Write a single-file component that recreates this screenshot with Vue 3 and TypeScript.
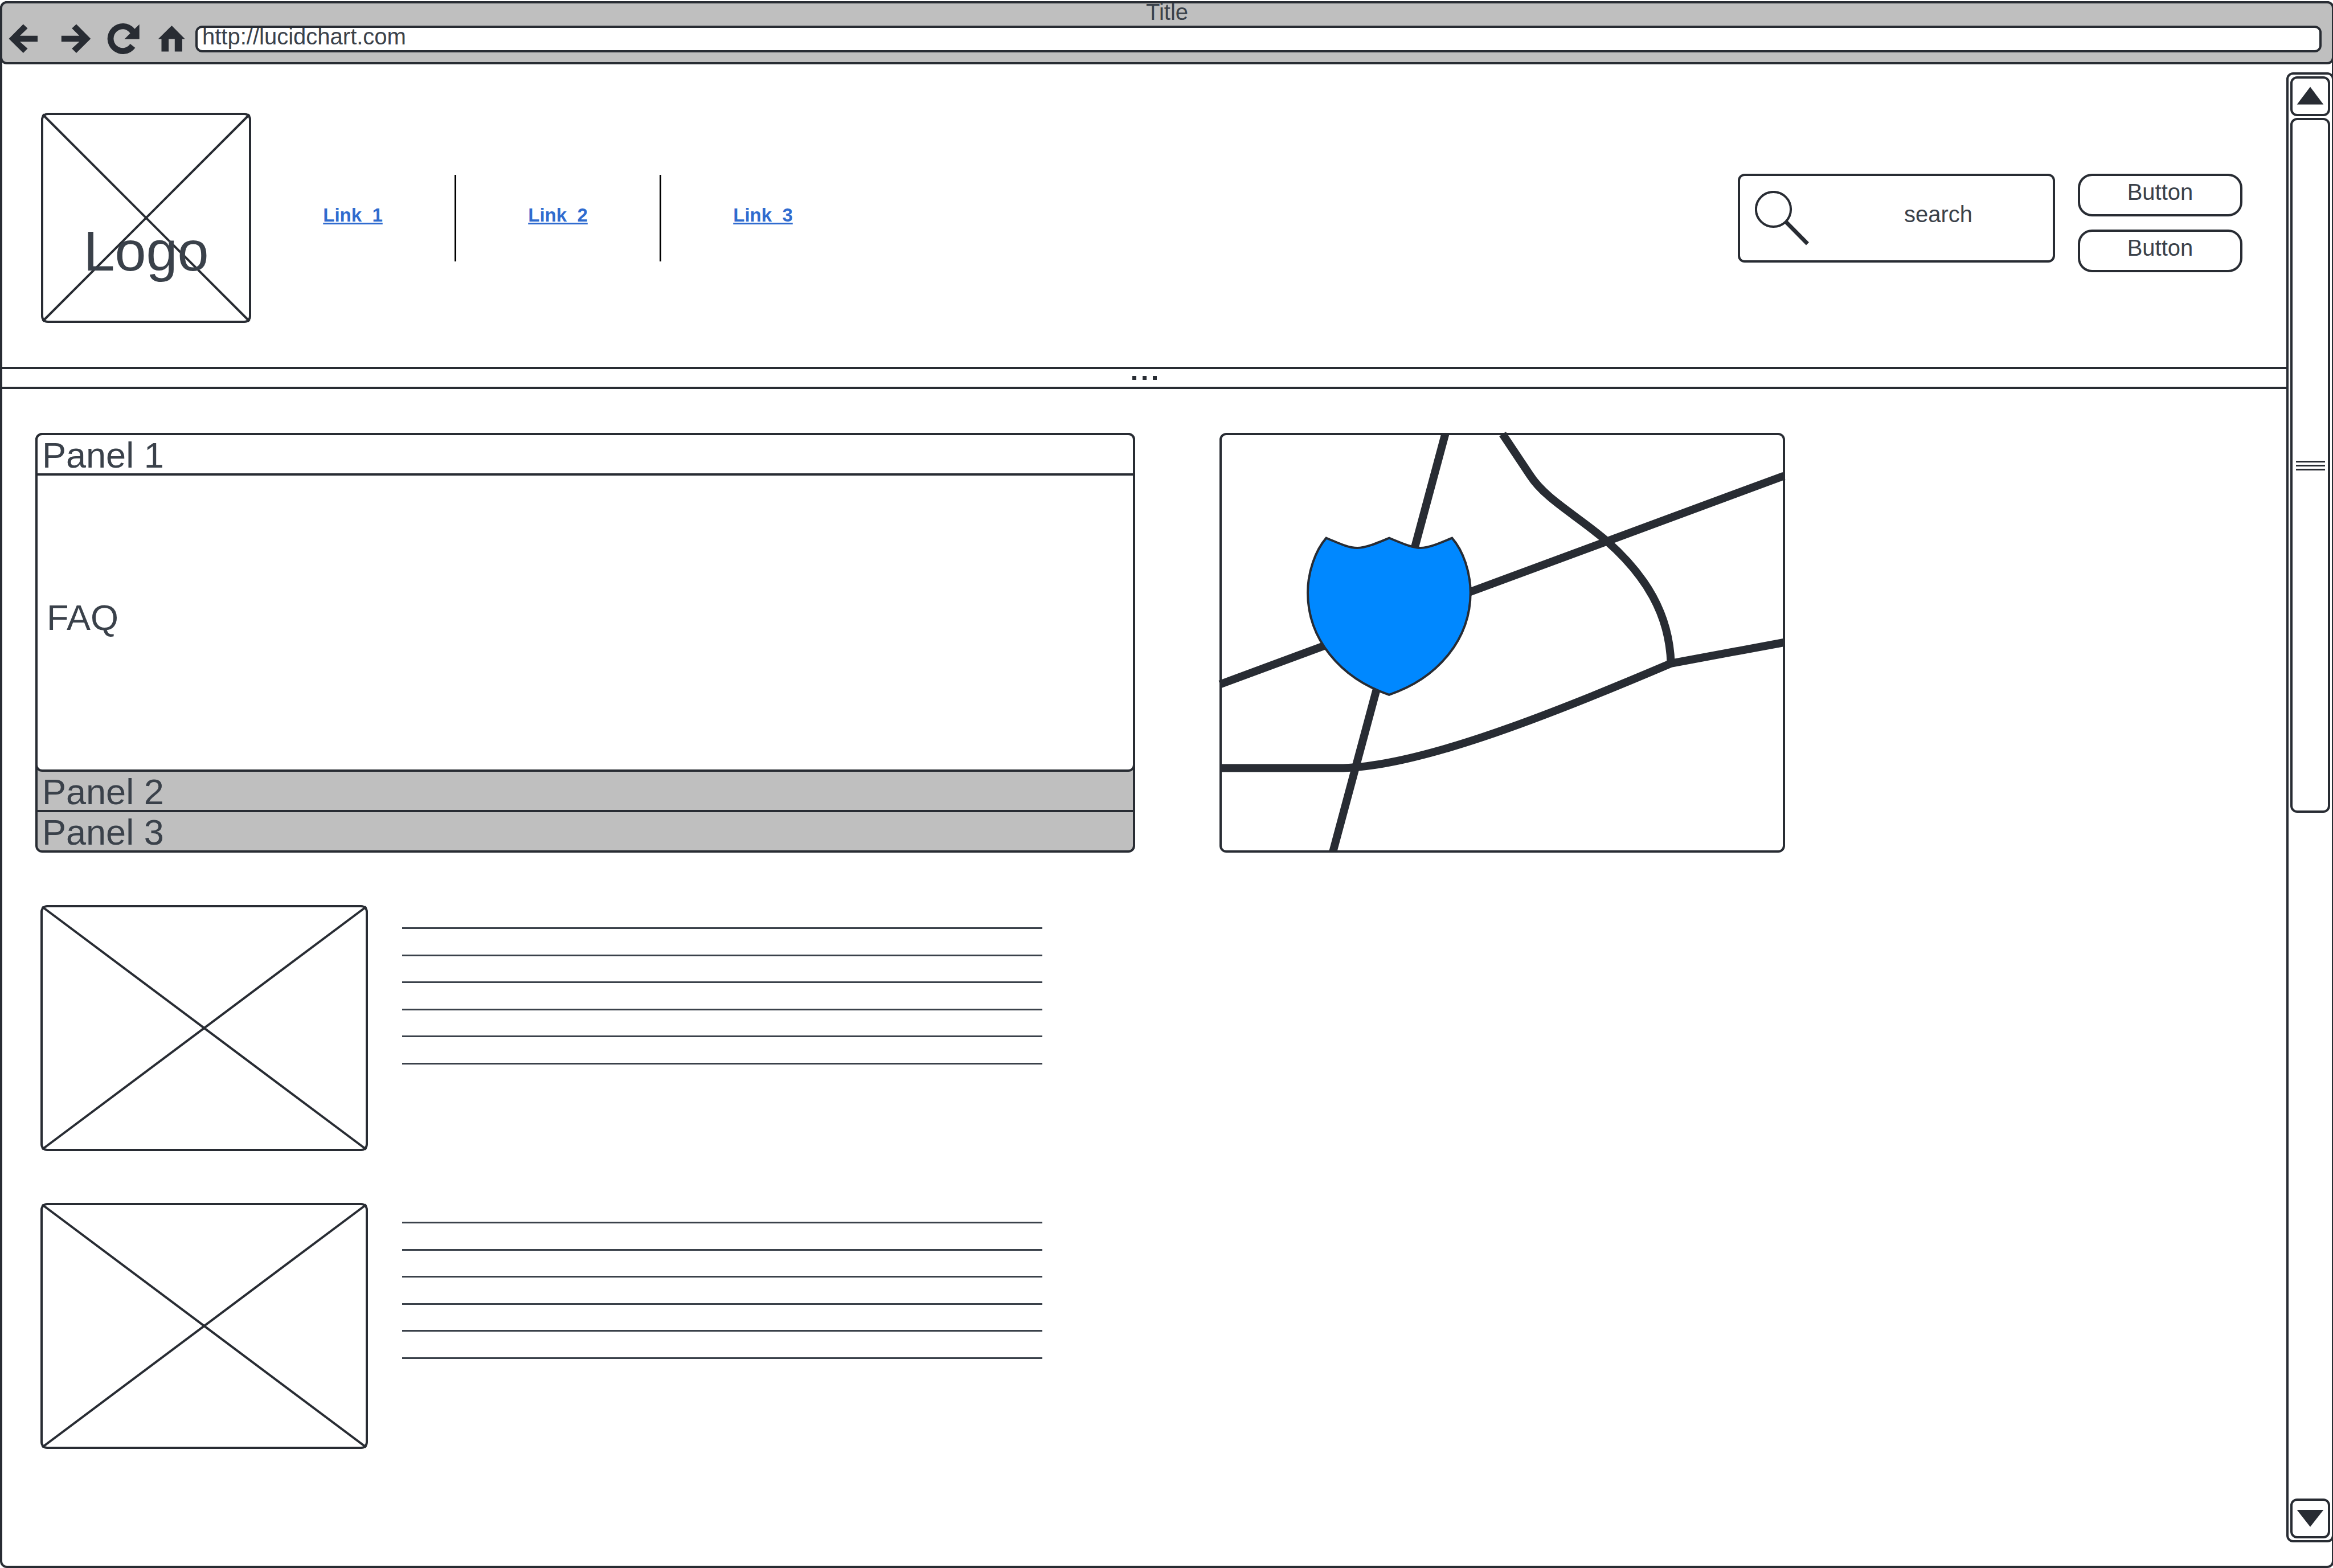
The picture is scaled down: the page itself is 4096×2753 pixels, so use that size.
<script setup lang="ts">
import { ref } from 'vue'

interface NavLink {
  label: string
  href: string
}

interface Panel {
  id: number
  title: string
}

interface ToolIcon {
  name: string
  path: string
}

const address = ref<string>('http://lucidchart.com')
const query = ref<string>('')

const toolIcons: ToolIcon[] = [
  {
    name: 'Back',
    path: 'M8.5 27.9L33.8 2.5L41.5 9.8L28 22.8H59V33.3H28L41.5 45.3L33.8 52.9Z',
  },
  {
    name: 'Forward',
    path: 'M68.2 27.9L43 2.5L35.2 9.8L48.3 22.8H16.8V33.3H48.3L35.2 45.3L43 52.9Z',
  },
  {
    name: 'Reload',
    path: 'M69.7 2.8V28.8H43.4L53.6 18.4A16 16.5 0 1 0 53.6 37.1L62.4 44A27 27 0 1 1 61.4 10.7Z',
  },
  {
    name: 'Home',
    path: 'M42.5 5L65.8 28.5H60.9V50.4H47.8V28.5H37.1V50.4H24.5V28.5H18.7Z',
  },
]

const links: NavLink[] = [
  { label: 'Link  1', href: '#link-1' },
  { label: 'Link  2', href: '#link-2' },
  { label: 'Link  3', href: '#link-3' },
]

const closedPanels: Panel[] = [
  { id: 2, title: 'Panel 2' },
  { id: 3, title: 'Panel 3' },
]

const articles: number[] = [1, 2]
const linesPerArticle = 6
</script>

<template>
  <div class="page">
    <div class="window">
      <header class="chrome">
        <div class="chrome-title">Title</div>
        <div class="toolbar">
          <button v-for="icon in toolIcons" :key="icon.name" type="button" class="tool" :aria-label="icon.name">
            <svg viewBox="0 0 84 56" width="84" height="56" aria-hidden="true">
              <path :d="icon.path" />
            </svg>
          </button>
          <input v-model="address" class="address" type="text" aria-label="Address" />
        </div>
      </header>

      <div class="body">
        <div class="content">
          <section class="masthead">
            <div class="placeholder logo">
              <svg class="cross" aria-hidden="true">
                <line x1="0" y1="0" x2="100%" y2="100%" />
                <line x1="100%" y1="0" x2="0" y2="100%" />
              </svg>
              <span class="logo-text">Logo</span>
            </div>
            <nav class="links">
              <div v-for="link in links" :key="link.href" class="link-cell">
                <a :href="link.href">{{ link.label }}</a>
              </div>
            </nav>
            <div class="tools">
              <label class="search">
                <svg class="lens" viewBox="0 0 96 98" width="96" height="98" aria-hidden="true">
                  <circle cx="32.5" cy="32.5" r="30.6" />
                  <line x1="54" y1="54" x2="92.5" y2="93" />
                </svg>
                <input v-model="query" type="text" placeholder="search" aria-label="search" />
              </label>
              <div class="buttons">
                <button type="button" class="action">Button</button>
                <button type="button" class="action">Button</button>
              </div>
            </div>
          </section>

          <div class="splitter" role="separator">
            <i></i><i></i><i></i>
          </div>

          <main class="main">
            <div class="feature-row">
              <div class="accordion">
                <div class="open-panel">
                  <button type="button" class="panel-head" aria-expanded="true">Panel 1</button>
                  <div class="panel-body">FAQ</div>
                </div>
                <button
                  v-for="panel in closedPanels"
                  :key="panel.id"
                  type="button"
                  class="panel-head closed"
                  aria-expanded="false"
                >
                  {{ panel.title }}
                </button>
              </div>

              <svg class="map" viewBox="0 0 993 737" role="img" aria-label="Map">
                <rect class="map-frame" x="2" y="2" width="989" height="733" rx="10" />
                <g class="roads">
                  <path d="M396.4 2L199.3 735" />
                  <path d="M1 441.5L991 75.5" />
                  <path d="M2 588.6H208C340 588.6 560 504 792.6 404.8L991 368" />
                  <path d="M497 2L545 74C572 116 625 143 680 190C748 250 790 318 792.6 404.8" />
                </g>
                <path
                  class="shield"
                  d="M187.4 184.6C212 195 228 202 242 202C256 202 273 195 298 184.6C323 195 339 202 353 202C367 202 384 195 408.3 184.6C428 207 440.7 245 440.7 280.4C440.7 360 386 430 297.8 459.8C210 430 155 360 155 280.4C155 245 168 207 187.4 184.6Z"
                />
              </svg>
            </div>

            <div class="articles">
              <div class="thumbs">
                <div v-for="n in articles" :key="n" class="placeholder thumb">
                  <svg class="cross" aria-hidden="true">
                    <line x1="0" y1="0" x2="100%" y2="100%" />
                    <line x1="100%" y1="0" x2="0" y2="100%" />
                  </svg>
                </div>
              </div>
              <div class="copy">
                <div v-for="n in articles" :key="n" class="copy-block">
                  <div v-for="line in linesPerArticle" :key="line" class="copy-line"></div>
                </div>
              </div>
            </div>
          </main>
        </div>

        <div class="scrollbar">
          <button type="button" class="scroll-step" aria-label="Scroll up">
            <svg viewBox="0 0 62 62" width="62" height="62" aria-hidden="true">
              <path d="M31 14.5L54.3 45.5H7.7Z" />
            </svg>
          </button>
          <div class="track">
            <div class="thumb-grip">
              <i></i><i></i><i></i>
            </div>
          </div>
          <button type="button" class="scroll-step" aria-label="Scroll down">
            <svg viewBox="0 0 62 62" width="62" height="62" aria-hidden="true">
              <path d="M7.7 16H54.3L31 45.7Z" />
            </svg>
          </button>
        </div>
      </div>
    </div>
  </div>
</template>

<style>
body {
  margin: 0;
  background: #ffffff;
}
</style>

<style scoped>
.page {
  --line: #282c33;
  --ink: #3a414a;
  --grey: #bfbfbf;
  padding-top: 2px;
  overflow: hidden;
  font-family: "Liberation Sans", Arial, sans-serif;
  font-size: 40px;
  color: var(--ink);
}

.page * {
  box-sizing: border-box;
}

button,
input {
  margin: 0;
  padding: 0;
  border: 0;
  background: none;
  font: inherit;
  color: inherit;
  outline: none;
}

svg {
  display: block;
}

.window {
  display: flex;
  flex-direction: column;
  min-height: calc(100vh - 2px);
  margin-right: -2px;
  border: 4px solid var(--line);
  border-radius: 12px;
  background: #ffffff;
}

.chrome {
  margin: -4px -4px 0;
  border: 4px solid var(--line);
  border-radius: 12px;
  background: var(--grey);
}

.chrome-title {
  line-height: 30px;
  text-align: center;
}

.toolbar {
  display: flex;
  align-items: center;
  padding: 4px 18px 13px 3px;
}

.tool {
  width: 84px;
  height: 56px;
}

.tool path {
  fill: var(--line);
}

.address {
  flex: 1;
  height: 47px;
  padding: 0 8px 8px;
  border: 4px solid var(--line);
  border-radius: 12px;
  background: #ffffff;
  line-height: 31px;
}

.body {
  flex: 1;
  display: flex;
}

.content {
  flex: 1;
  min-width: 0;
}

.masthead {
  display: flex;
  align-items: center;
  padding: 85px 77px 77px 68px;
}

.placeholder {
  position: relative;
  border: 4px solid var(--line);
  border-radius: 12px;
}

.cross {
  position: absolute;
  top: -1px;
  left: -1px;
  width: calc(100% + 2px);
  height: calc(100% + 2px);
  overflow: visible;
  stroke: var(--line);
  stroke-width: 4;
}

.logo {
  display: flex;
  align-items: flex-end;
  justify-content: center;
  width: 369px;
  height: 369px;
  padding-bottom: 66px;
}

.logo-text {
  position: relative;
  font-size: 99px;
  line-height: 112px;
}

.links {
  display: flex;
}

.link-cell {
  display: flex;
  align-items: center;
  justify-content: center;
  width: 360px;
  height: 152px;
  padding-bottom: 10px;
  border-right: 3px solid #000000;
}

.link-cell:last-child {
  border-right-color: transparent;
}

.link-cell a {
  font-size: 33px;
  font-weight: 700;
  line-height: 38px;
  white-space: pre;
  color: #2f6bcf;
  text-decoration: underline;
  text-decoration-thickness: 3px;
  text-underline-offset: 2px;
}

.tools {
  display: flex;
  align-items: flex-start;
  align-self: flex-start;
  gap: 40px;
  margin-top: 107px;
  margin-left: auto;
}

.search {
  display: flex;
  gap: 25px;
  width: 557px;
  height: 156px;
  padding-left: 26px;
  border: 4px solid var(--line);
  border-radius: 12px;
}

.lens {
  flex: none;
  margin-top: 26px;
  fill: none;
  stroke: var(--line);
  stroke-width: 4;
}

.lens line {
  stroke-width: 7;
}

.search input {
  flex: 1;
  min-width: 0;
  padding-bottom: 14px;
  text-align: center;
}

.search input::placeholder {
  color: var(--ink);
  opacity: 1;
}

.buttons {
  display: flex;
  flex-direction: column;
  gap: 23px;
}

.action {
  width: 289px;
  height: 75px;
  padding-bottom: 11px;
  border: 4px solid var(--line);
  border-radius: 25px;
  line-height: 46px;
}

.splitter {
  display: flex;
  align-items: center;
  justify-content: center;
  gap: 11px;
  height: 39px;
  border-top: 4px solid var(--line);
  border-bottom: 4px solid var(--line);
}

.splitter i {
  width: 7px;
  height: 7px;
  background: var(--line);
}

.main {
  padding: 77px 0 0 58px;
}

.feature-row {
  display: grid;
  grid-template-columns: 1931fr 993fr 732fr;
  column-gap: 148px;
  align-items: start;
}

.accordion {
  border: 4px solid var(--line);
  border-radius: 12px;
  background: var(--grey);
}

.open-panel {
  margin: -4px -4px 0;
  border: 4px solid var(--line);
  border-radius: 12px;
  background: #ffffff;
}

.panel-head {
  display: block;
  width: 100%;
  height: 67px;
  padding: 4px 8px 0;
  font-size: 63px;
  line-height: 63px;
  text-align: left;
}

.closed + .closed {
  height: 71px;
  border-top: 4px solid var(--line);
}

.panel-body {
  display: flex;
  align-items: center;
  height: 520px;
  padding: 0 16px 18px;
  border-top: 4px solid var(--line);
  font-size: 63px;
}

.map {
  width: 100%;
  overflow: visible;
}

.map-frame {
  fill: #ffffff;
  stroke: var(--line);
  stroke-width: 4;
}

.roads {
  fill: none;
  stroke: var(--line);
  stroke-width: 14;
}

.shield {
  fill: #0088ff;
  stroke: var(--line);
  stroke-width: 4;
}

.articles {
  display: flex;
  gap: 60px;
  padding: 92px 0 0 9px;
}

.thumbs {
  display: flex;
  flex-direction: column;
  gap: 91px;
}

.thumb {
  width: 575px;
  height: 432px;
}

.copy {
  display: flex;
  flex-direction: column;
  gap: 276px;
  width: 1124px;
  padding-top: 39px;
}

.copy-block {
  display: flex;
  flex-direction: column;
  justify-content: space-between;
  height: 241px;
}

.copy-line {
  height: 3px;
  background: var(--ink);
}

.scrollbar {
  display: flex;
  flex-direction: column;
  gap: 3px;
  width: 84px;
  margin: 14px -4px 41px 0;
  padding: 3px;
  border: 4px solid var(--line);
  border-radius: 12px;
}

.scroll-step {
  flex: none;
  width: 70px;
  height: 70px;
  border: 4px solid var(--line);
  border-radius: 12px;
}

.scroll-step path {
  fill: var(--line);
}

.track {
  flex: 1;
  display: grid;
  grid-template-rows: 1220fr 1201fr;
}

.thumb-grip {
  display: flex;
  flex-direction: column;
  align-items: center;
  justify-content: center;
  gap: 4px;
  border: 4px solid var(--line);
  border-radius: 12px;
}

.thumb-grip i {
  width: 51px;
  height: 3px;
  background: var(--line);
}
</style>
